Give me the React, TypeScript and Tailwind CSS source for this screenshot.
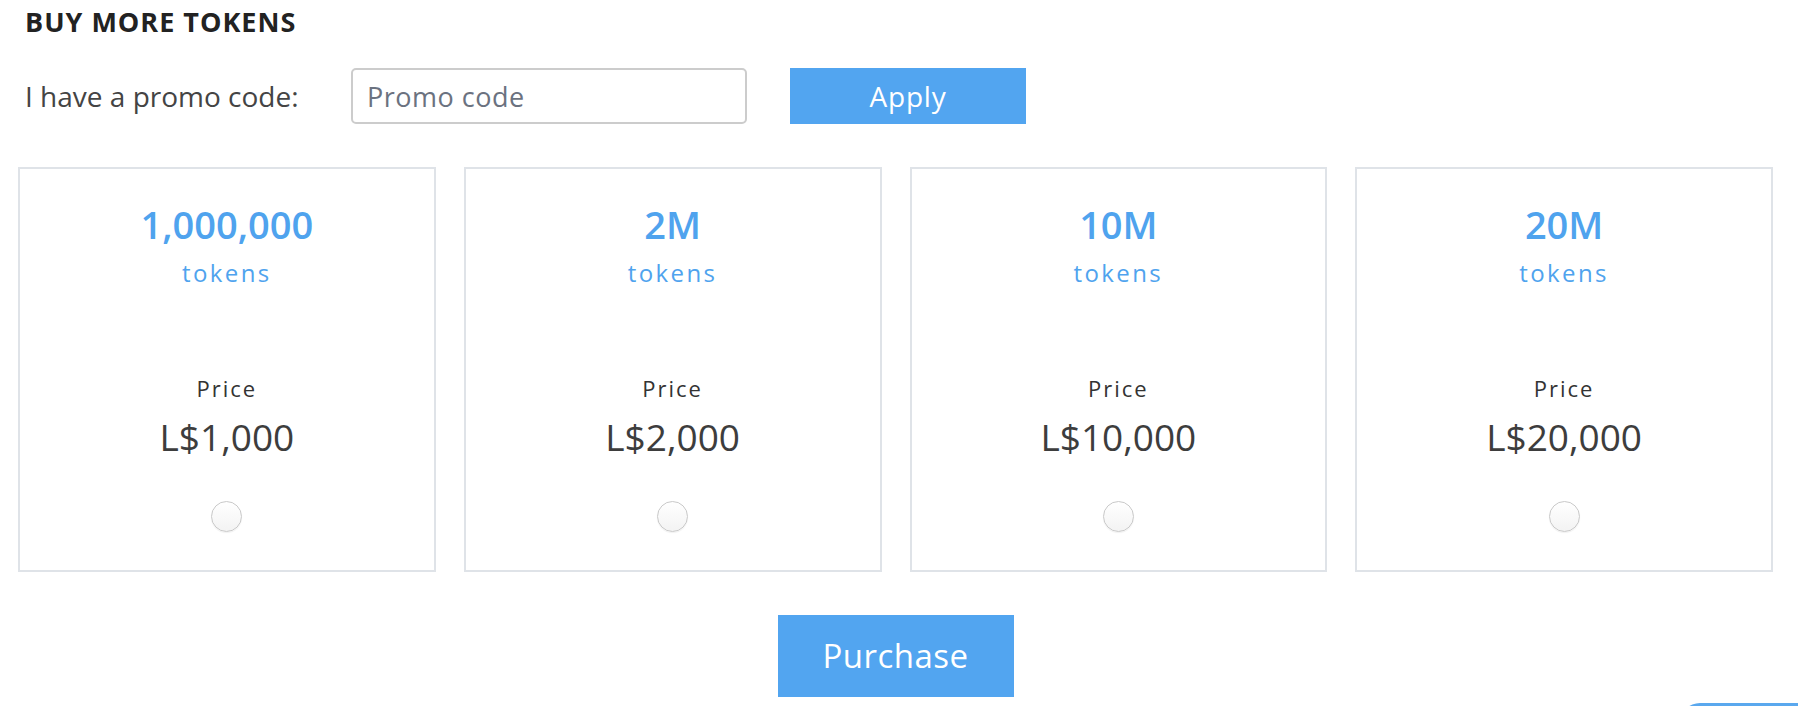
import { useState } from "react";

interface TokenPackage {
  id: string;
  amount: string;
  price: string;
}

const packages: TokenPackage[] = [
  { id: "1m", amount: "1,000,000", price: "L$1,000" },
  { id: "2m", amount: "2M", price: "L$2,000" },
  { id: "10m", amount: "10M", price: "L$10,000" },
  { id: "20m", amount: "20M", price: "L$20,000" },
];

const PackageCard: React.FC<{
  pkg: TokenPackage;
  selected: boolean;
  onSelect: () => void;
}> = ({ pkg, selected, onSelect }) => (
  <label className="flex cursor-pointer flex-col items-center border-2 border-[#dfe3e8] bg-white pt-[31px] pb-[38px]">
    {/* amount */}
    <div className="text-[38px] leading-[48px] font-semibold text-[#4fa3ee]">
      {pkg.amount}
    </div>
    <div className="mt-[9px] text-[24px] leading-[32px] font-medium tracking-[2.4px] text-[#4fa3ee]">
      tokens
    </div>

    {/* price */}
    <div className="mt-[84px] text-[22px] leading-[30px] tracking-[2px] text-[#333333]">
      Price
    </div>
    <div className="mt-[11px] text-[37px] leading-[46px] text-[#3d3d3d]">
      {pkg.price}
    </div>

    {/* radio */}
    <input
      type="radio"
      name="package"
      checked={selected}
      onChange={onSelect}
      className="mt-[41px] h-[31px] w-[31px] cursor-pointer appearance-none rounded-full border border-[#c9c9c9] bg-gradient-to-b from-white to-[#f3f3f3] shadow-[0_1px_1px_rgba(0,0,0,0.06)] checked:border-[#4fa3ee] checked:bg-[#4fa3ee] checked:bg-none"
    />
  </label>
);

export default function App() {
  const [promo, setPromo] = useState("");
  const [selected, setSelected] = useState<string | null>(null);

  return (
    <div
      className="min-h-screen bg-white pt-[2px] pl-[18px] pr-[25px]"
      style={{ fontFamily: '"Open Sans", "Noto Sans", sans-serif' }}
    >
      {/* heading */}
      <h1 className="pl-[7px] text-[27px] leading-[39px] font-bold tracking-[1px] text-[#222222]">
        BUY MORE TOKENS
      </h1>

      {/* promo row */}
      <div className="mt-[27px] flex items-center pl-[7px]">
        <span className="w-[326px] text-[28px] leading-[40px] text-[#444444]">
          I have a promo code:
        </span>
        <input
          type="text"
          value={promo}
          onChange={(e) => setPromo(e.target.value)}
          placeholder="Promo code"
          className="h-[56px] w-[396px] rounded-[5px] border-2 border-[#cccccc] bg-white pl-[14px] text-[27px] tracking-[0.5px] text-[#444444] outline-none placeholder:text-[#6b7280]"
        />
        <button className="ml-[43px] h-[56px] w-[236px] bg-[#52a5f0] text-[28px] tracking-[0.8px] text-white">
          Apply
        </button>
      </div>

      {/* packages */}
      <div className="mt-[43px] grid grid-cols-4 gap-[28px]">
        {packages.map((pkg) => (
          <PackageCard
            key={pkg.id}
            pkg={pkg}
            selected={selected === pkg.id}
            onSelect={() => setSelected(pkg.id)}
          />
        ))}
      </div>

      {/* purchase */}
      <div className="mt-[43px] flex justify-center">
        <button className="h-[82px] w-[236px] bg-[#52a5f0] text-[33px] tracking-[0.5px] text-white">
          Purchase
        </button>
      </div>

      {/* floating widget peeking in at the corner */}
      <div className="fixed right-[-20px] bottom-[-37px] h-[40px] w-[138px] rounded-full bg-[#5aa8ee]" />
    </div>
  );
}
